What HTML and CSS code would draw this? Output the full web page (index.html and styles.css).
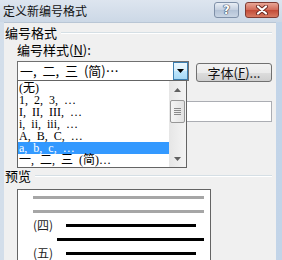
FILE: index.html
```html
<!DOCTYPE html>
<html lang="zh-CN">
<head>
    <meta charset="UTF-8">
    <meta name="viewport" content="width=device-width, initial-scale=1.0">
    <title>定义新编号格式</title>
    <link rel="stylesheet" href="styles.css">
</head>
<body>
<div class="window">
    <div class="titlebar">
        <span class="title">定义新编号格式</span>
        <div class="caption">
            <span class="cap-help">?</span>
            <span class="cap-close">
                <svg width="14" height="10" viewBox="0 0 14 10"><path d="M3 1.5 L11 8.5 M11 1.5 L3 8.5" stroke="#6b2a22" stroke-width="4" stroke-linecap="round"/><path d="M3 1.5 L11 8.5 M11 1.5 L3 8.5" stroke="#fff" stroke-width="2.2" stroke-linecap="round"/></svg>
            </span>
        </div>
    </div>

    <div class="client">
        <div class="group-head"><span>编号格式</span><span class="rule"></span></div>
        <div class="group-body">
            <div class="label first">编号样式(<u>N</u>):</div>
            <div class="row">
                <div class="combo">
                    <span class="combo-text">一, 二, 三 (简)…</span>
                    <span class="combo-btn"><svg width="7" height="4" viewBox="0 0 7 4"><path d="M0 0 H7 L3.5 4 Z" fill="#000"/></svg></span>

                    <!-- open drop-down list, lies over the fields below -->
                    <div class="droplist">
                        <ul class="items">
                            <li>(无)</li>
                            <li>1, 2, 3, …</li>
                            <li>I, II, III, …</li>
                            <li>i, ii, iii, …</li>
                            <li>A, B, C, …</li>
                            <li class="selected">a, b, c, …</li>
                            <li>一, 二, 三 (简)…</li>
                        </ul>
                        <div class="vscroll">
                            <span class="sb-arrow"><svg width="7" height="4" viewBox="0 0 7 4"><path d="M0 4 H7 L3.5 0 Z" fill="#606060"/></svg></span>
                            <span class="sb-track">
                                <span class="thumb"><i></i><i></i><i></i><i></i></span>
                            </span>
                            <span class="sb-arrow"><svg width="7" height="4" viewBox="0 0 7 4"><path d="M0 0 H7 L3.5 4 Z" fill="#606060"/></svg></span>
                        </div>
                    </div>
                </div>
                <span class="push">字体(<u>F</u>)...</span>
            </div>
            <div class="label">编号格式(<u>O</u>):</div>
            <div class="textbox"></div>
            <div class="label">对齐方式(<u>M</u>):</div>
            <div class="combo combo-small"></div>
        </div>

        <div class="group-head head-preview"><span>预览</span><span class="rule"></span></div>
        <div class="group-body">
            <div class="preview">
                <div class="pv-row"><i class="bar grey"></i></div>
                <div class="pv-row"><i class="bar grey"></i></div>
                <div class="pv-row"><span class="pv-num">(四)</span><i class="bar black short"></i></div>
                <div class="pv-row"><i class="bar black long"></i></div>
                <div class="pv-row"><span class="pv-num">(五)</span><i class="bar black short"></i></div>
            </div>
        </div>
    </div>
</div>
</body>
</html>
```

FILE: styles.css
```css
* {
  box-sizing: border-box;
  margin: 0;
  padding: 0;
}

body {
  width: 282px;
  height: 260px;
  overflow: hidden;
  font-family: "Noto Sans CJK SC", sans-serif;
  font-size: 12px;
  color: #000;
}

u {
  text-decoration: underline;
  text-underline-offset: 1px;
}

.window {
  height: 260px;
  display: flex;
  flex-direction: column;
  overflow: hidden;
  background: linear-gradient(to right, #d3deea, #c2d4e8);
}

/* title bar */
.titlebar {
  height: 22px;
  flex: none;
  display: flex;
  align-items: center;
  justify-content: space-between;
  padding: 0 3px 0 3px;
  background: linear-gradient(#dde5ef, #ccd8e6);
}

.title {
  font-size: 12px;
  line-height: 14px;
  color: #111;
}

.caption {
  display: flex;
  gap: 6px;
  align-self: flex-start;
  margin-top: 2px;
}

.cap-help {
  width: 25px;
  height: 16px;
  border: 1px solid #7f90a8;
  border-radius: 3px;
  background: linear-gradient(#e9eef5, #c3cfdf 50%, #b3c2d6 51%, #c9d5e4);
  color: #fff;
  font-family: "DejaVu Sans", sans-serif;
  font-weight: bold;
  font-size: 12px;
  line-height: 14px;
  text-align: center;
  text-shadow: 0 0 1px #24324a, 0 0 1px #24324a, 0 0 1px #24324a;
}

.cap-close {
  width: 34px;
  height: 16px;
  border: 1px solid #7e3b33;
  border-radius: 3px;
  background: linear-gradient(#e8a696, #d16a58 50%, #c24a36 51%, #d77a62);
  display: flex;
  align-items: center;
  justify-content: center;
}

/* client area */
.client {
  flex: 1;
  min-height: 0;
  overflow: hidden;
  margin: 0 6px 0 4px;
  background: #f0f0f0;
  border-top: 1px solid #b9c6d5;
  padding: 3px 4px 0 1px;
}

.group-head {
  height: 14px;
  display: flex;
  align-items: center;
  gap: 4px;
  font-size: 13px;
  line-height: 14px;
}

.group-head .rule {
  flex: 1;
  height: 2px;
  border-top: 1px solid #d5dfe5;
  border-bottom: 1px solid #fff;
}

.head-preview {
  margin-top: 7px;
}

.group-body {
  padding-left: 12px;
}

.label {
  height: 14px;
  margin-top: 4px;
  font-size: 13px;
  line-height: 14px;
}

.label.first {
  margin-top: 3px;
}

.row {
  display: flex;
  gap: 7px;
  margin-top: 4px;
}

/* combo box */
.combo {
  position: relative;
  width: 172px;
  height: 20px;
  border: 1px solid #707070;
  background: #fff;
  display: flex;
  align-items: center;
}

.combo-text {
  padding-left: 2px;
  font-size: 13px;
  line-height: 16px;
  word-spacing: 3px;
  flex: 1;
}

.combo-btn {
  width: 15px;
  height: 18px;
  border: 1px solid #3c7fb1;
  background: linear-gradient(#eaf6fd, #d9f0fc 50%, #bee6fd 51%, #a7d9f5);
  display: flex;
  align-items: center;
  justify-content: center;
}

.combo-small {
  width: 110px;
  margin-top: 2px;
}

.droplist {
  position: absolute;
  left: -1px;
  top: 18px;
  width: 170px;
  height: 88px;
  border: 1px solid #646464;
  background: #fff;
  display: flex;
  z-index: 2;
}

.items {
  list-style: none;
  flex: 1;
  padding-top: 1px;
  font-family: "Liberation Serif", "Noto Sans CJK SC", serif;
  font-size: 12px;
  word-spacing: 3px;
}

.items li {
  height: 12px;
  line-height: 12px;
  padding-left: 1px;
  white-space: nowrap;
}

.items li.selected {
  background: #3399ff;
  color: #fff;
}

.vscroll {
  width: 17px;
  display: flex;
  flex-direction: column;
  background: linear-gradient(to right, #e6e6e6, #f4f4f4);
}

.sb-arrow {
  height: 17px;
  display: flex;
  align-items: center;
  justify-content: center;
}

.sb-track {
  flex: 1;
  padding-top: 2px;
}

.thumb {
  display: flex;
  flex-direction: column;
  align-items: center;
  justify-content: center;
  gap: 1px;
  height: 23px;
  margin: 0 1px;
  border: 1px solid #979797;
  border-radius: 2px;
  background: linear-gradient(to right, #f5f5f5, #e2e2e2);
}

.thumb i {
  width: 7px;
  height: 1px;
  background: #8a8a8a;
}

.push {
  width: 76px;
  height: 19px;
  margin-top: 2px;
  border: 1px solid #707070;
  border-radius: 3px;
  background: linear-gradient(#f2f2f2, #ebebeb 50%, #dddddd 51%, #cfcfcf);
  font-size: 13px;
  line-height: 17px;
  text-align: center;
  color: #111;
}

.textbox {
  height: 21px;
  margin-top: 1px;
  border: 1px solid #abadb3;
  background: #fff;
}

/* preview */
.preview {
  width: 194px;
  height: 72px;
  margin-top: 6px;
  border: 1px solid #646464;
  border-bottom: none;
  background: #fff;
  padding: 0 0 0 15px;
}

.pv-row {
  height: 14px;
  display: flex;
  align-items: center;
}

.pv-num {
  width: 33px;
  font-size: 12px;
  line-height: 14px;
  color: #222;
}

.bar {
  display: block;
  height: 3px;
}

.bar.grey {
  width: 171px;
  background: #a6a6a6;
}

.bar.black {
  background: #000;
}

.bar.short {
  width: 130px;
}

.bar.long {
  width: 147px;
  margin-left: 24px;
}
```
